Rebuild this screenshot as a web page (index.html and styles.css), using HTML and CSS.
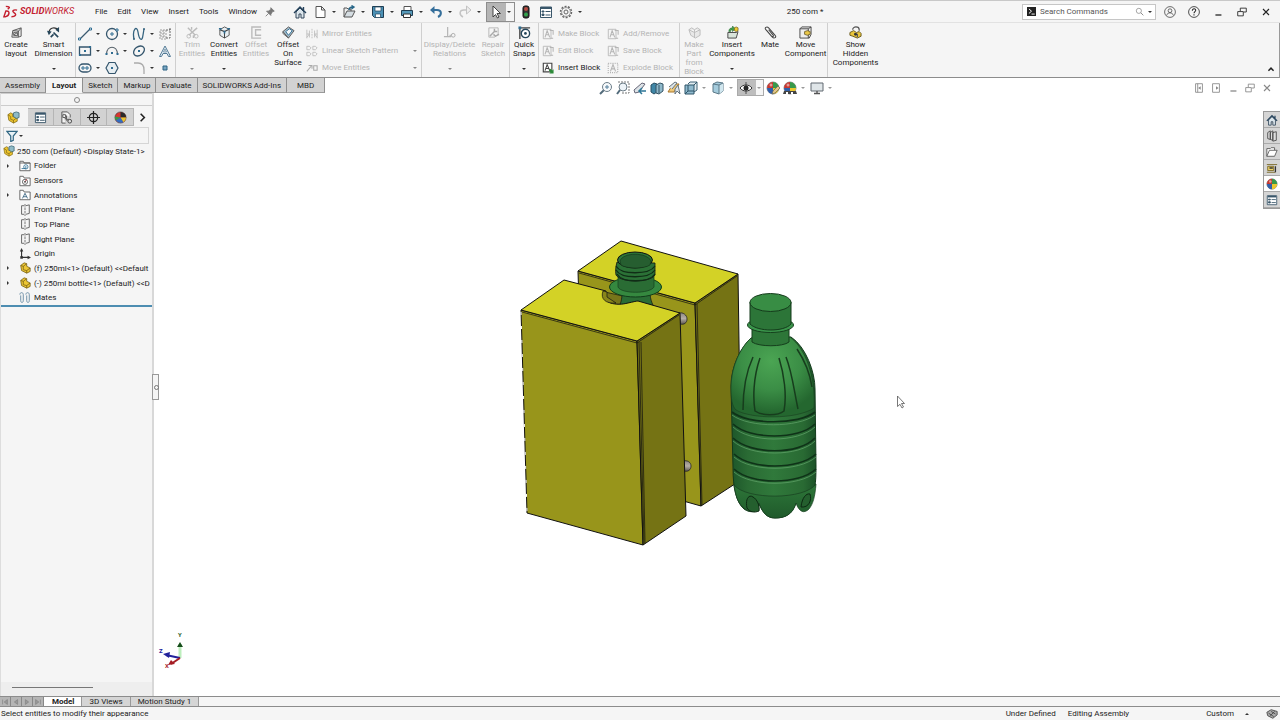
FILE: index.html
```html
<!DOCTYPE html>
<html lang="en">
<head>
    <meta charset="UTF-8">
    <meta name="viewport" content="width=device-width, initial-scale=1.0">
    <title>SOLIDWORKS - 250 com</title>
    <link rel="stylesheet" href="styles.css">
</head>
<body>
    <!-- icon set -->
    <svg class="sprite" aria-hidden="true">
        <symbol id="i-home" viewBox="0 0 14 14"><path d="M3 7v6h3V9h2v4h3V7L7 3z" fill="#dce6ec" stroke="#33475a"/><path d="M1 8l6-6 6 6M10.500 2v3" fill="none" stroke="#26435c" stroke-width="1.400"/></symbol>
        <symbol id="i-new" viewBox="0 0 14 14"><path d="M3 1.500h5.500L12 5v7.500H3zM8.500 1.500V5H12" fill="#fff" stroke="#555"/></symbol>
        <symbol id="i-open" viewBox="0 0 14 14"><path d="M2 12V3h3l1 1h3v2" fill="#eee" stroke="#555"/><path d="M2 12l3-6h8l-3 6z" fill="#d5dde2" stroke="#555"/><path d="M7 5c0-2 2-3 4-3M9.500.500L12 2 9.500 4" fill="none" stroke="#276789" stroke-width="1.400"/></symbol>
        <symbol id="i-save" viewBox="0 0 14 14"><path d="M1.500 1.500h11v11h-9l-2-2z" fill="#4c91b5" stroke="#1e3d52"/><path d="M4 2h6v4H4zM4.500 9h5v3.500h-5z" fill="#fff" stroke="#24455c" stroke-width=".7"/></symbol>
        <symbol id="i-print" viewBox="0 0 14 14"><path d="M4 6V1.500h7V6" fill="#fff" stroke="#555"/><path d="M1.500 5.500h11v5h-11z" fill="#579aba" stroke="#1e3d52"/><path d="M3.500 9h7v3.500h-7z" fill="#fff" stroke="#333"/></symbol>
        <symbol id="i-undo" viewBox="0 0 14 14"><path d="M2 5h6c5 0 5 5 1 7" fill="none" stroke="#356f9b" stroke-width="2"/><path d="M5.500 1L1 5l4.500 4z" fill="#356f9b"/></symbol>
        <symbol id="i-redo" viewBox="0 0 14 14"><path d="M12 5H6c-5 0-5 5-1 7" fill="none" stroke="#c3c3c3" stroke-width="1.500"/><path d="M8.500 1L13 5 8.500 9z" fill="#eee" stroke="#c3c3c3"/></symbol>
        <symbol id="i-cursor" viewBox="0 0 14 14"><path d="M4 1v11l2.500-2.500L8.500 13l1.500-1-2-3.500h3.500z" fill="#fff" stroke="#333" stroke-width=".9"/></symbol>
        <symbol id="i-traffic" viewBox="0 0 14 14"><rect x="4" y="1" width="6" height="12" rx="2" fill="#333" stroke="#111"/><circle cx="7" cy="4" r="2" fill="#b64b42"/><circle cx="7" cy="9.500" r="2" fill="#32a24b"/></symbol>
        <symbol id="i-props" viewBox="0 0 14 14"><path d="M1.500 2h11v10.500h-11z" fill="#fff" stroke="#39566a"/><path d="M2 3h10" stroke="#39566a" stroke-width="2"/><path d="M3 6h2v1H3zm0 3h2v1.500H3z" fill="#39566a" stroke="#39566a"/><path d="M6.500 6.500h5m-5 3.500h5" stroke="#39566a"/></symbol>
        <symbol id="i-gear" viewBox="0 0 14 14"><circle cx="7" cy="7" r="5.500" fill="none" stroke="#666" stroke-width="1.500" stroke-dasharray="2 1.400"/><circle cx="7" cy="7" r="4.400" fill="none" stroke="#777" stroke-width=".7"/><circle cx="7" cy="7" r="2" fill="none" stroke="#666"/></symbol>
        <symbol id="i-pin" viewBox="0 0 14 14"><path d="M8 2l4 4-2 .5-2 3V11L3 6h2l3-2zM5.500 8.500L2 12" fill="#777" stroke="#777"/></symbol>
        <symbol id="i-layout" viewBox="0 0 14 14"><path d="M2 12l1-7 9-3v9l-3 1z" fill="#e8e8e8" stroke="#555"/><path d="M3 5l6 .5 3-3M9 5.500V12M4 10l6-5M4 7l4 .5v3L4 10z" fill="none" stroke="#555"/></symbol>
        <symbol id="i-dimension" viewBox="0 0 14 14"><path d="M2 7C3 1 9 1 12 4" fill="none" stroke="#333" stroke-width="1.300"/><path d="M0 5l5 1-3 4zM13 1v6L9 4z" fill="#26465a"/><path d="M7 7l5 5M4 12l3-3" stroke="#26465a" stroke-width="1.800"/></symbol>
        <symbol id="i-line" viewBox="0 0 14 14"><path d="M2 12L12 2" stroke="#3b5a70" stroke-width="1.200"/><path d="M.500 11h2v2h-2zM11.500 1h2v2h-2z" fill="#fff" stroke="#2f6c91"/></symbol>
        <symbol id="i-circle" viewBox="0 0 14 14"><circle cx="7" cy="7" r="5.500" fill="none" stroke="#35566d" stroke-width="1.300"/><path d="M6 6h2v2H6zM11 2h2v2h-2z" fill="#fff" stroke="#2f6c91"/></symbol>
        <symbol id="i-spline" viewBox="0 0 14 14"><path d="M2 12C0 2 5-2 6 5s4 11 5 3l1-6" fill="none" stroke="#35637f" stroke-width="1.300"/><circle cx="2" cy="12" r="1" fill="#35637f"/><circle cx="12" cy="2" r="1" fill="#35637f"/></symbol>
        <symbol id="i-plane-tool" viewBox="0 0 14 14"><path d="M2 3h6v9H2zM2 6h6M2 9h6M5 3v9" fill="none" stroke="#888" stroke-width=".8" stroke-dasharray="2 1"/><path d="M8 3h4V1M12 1v10H8" fill="none" stroke="#666" stroke-dasharray="2 1"/></symbol>
        <symbol id="i-rect" viewBox="0 0 14 14"><path d="M1.500 3h11v8h-11z" fill="none" stroke="#35566d" stroke-width="1.300"/><path d="M6 6h2v2H6zM11 2h2v2h-2zM1 10h2v2H1z" fill="#2f6c91"/></symbol>
        <symbol id="i-arc" viewBox="0 0 14 14"><path d="M1.500 10C2 1 12 1 12.500 10" fill="none" stroke="#56616a" stroke-width="1.200"/><path d="M6 8h2v2H6zM.500 9h2v2h-2zM11.500 9h2v2h-2z" fill="#2f6c91"/></symbol>
        <symbol id="i-ellipse" viewBox="0 0 14 14"><ellipse cx="7" cy="7" rx="6" ry="4.300" transform="rotate(-38 7 7)" fill="none" stroke="#35566d" stroke-width="1.300"/><path d="M6 6h2v2H6z" fill="#2f6c91"/></symbol>
        <symbol id="i-text" viewBox="0 0 14 14"><path d="M1.500 12.500L7 2l5.500 10.500h-2L9 9.500H5l-1.500 3z" fill="#e7f0f6" stroke="#557b96"/><path d="M5.500 8h3L7 5z" fill="#f5f5f5" stroke="#557b96" stroke-width=".7"/></symbol>
        <symbol id="i-slot" viewBox="0 0 14 14"><rect x="1" y="3" width="12" height="8" rx="4" fill="none" stroke="#35566d" stroke-width="1.300"/><path d="M4 6h2v2H4zM8 6h2v2H8z" fill="#fff" stroke="#2f6c91"/></symbol>
        <symbol id="i-polygon" viewBox="0 0 14 14"><path d="M4 1.500h6L13 7l-3 5.500H4L1 7z" fill="#e7eef2" stroke="#35566d" stroke-width="1.200"/><path d="M6 6h2v2H6z" fill="#2f6c91"/></symbol>
        <symbol id="i-fillet" viewBox="0 0 14 14"><path d="M2 2h4c4 0 6 3 6 7v4" fill="none" stroke="#aaa" stroke-width="1.300"/></symbol>
        <symbol id="i-point" viewBox="0 0 14 14"><path d="M5 5h4v4H5z" fill="#7aa6c2" stroke="#2d6283"/></symbol>
        <symbol id="i-trim" viewBox="0 0 14 14"><path d="M2 2l8 8M12 2L3 10M6 1v3M8 10v3" stroke="#bbb" stroke-width="1.500"/><circle cx="3" cy="11" r="2" fill="none" stroke="#bbb"/><circle cx="11" cy="11" r="2" fill="none" stroke="#bbb"/></symbol>
        <symbol id="i-convert" viewBox="0 0 14 14"><path d="M2 4l5-3 5 2.500v6.500l-5 3-5-3z" fill="#e9eff2" stroke="#555"/><path d="M2 4l5 2 5-2.500M7 6v7" fill="none" stroke="#444" stroke-width="1.100"/><path d="M1 3h3M10 3h3M7 5v3" stroke="#2f6c91" stroke-width="1.800"/></symbol>
        <symbol id="i-offset" viewBox="0 0 14 14"><path d="M12 1H2v12h10M12 4H6v6h6" fill="none" stroke="#bbb" stroke-width="1.500"/></symbol>
        <symbol id="i-surface" viewBox="0 0 14 14"><path d="M1 6l6-5 6 4-6 8z" fill="#a9bfcc" stroke="#555"/><path d="M4 6l4-3 3 2-4 5z" fill="#f3f7f9" stroke="#2f6c91"/><path d="M1 6v2l6 5" fill="none" stroke="#555"/></symbol>
        <symbol id="i-mirror" viewBox="0 0 14 14"><path d="M1 2v10M13 2v10M1 7h3l-3 4M13 7h-3l3 4M4 3v8M10 3v8" fill="none" stroke="#bbb"/><path d="M7 1v12" stroke="#bbb" stroke-dasharray="2 1"/></symbol>
        <symbol id="i-pattern" viewBox="0 0 14 14"><path d="M1 1.500h3l2 2-2 2H1zM8 1.500h3l2 2-2 2H8zM1 8.500h3l2 2-2 2H1zM8 8.500h3l2 2-2 2H8z" fill="none" stroke="#bbb"/></symbol>
        <symbol id="i-move" viewBox="0 0 14 14"><path d="M1 11l5-6M3 4h4v4M9 4.500h4v5H9z" fill="none" stroke="#aaa" stroke-width="1.200"/></symbol>
        <symbol id="i-relations" viewBox="0 0 14 14"><path d="M5 1v10M1 11.500h8" stroke="#b5b5b5" stroke-width="1.300"/><circle cx="11" cy="10" r="2" fill="none" stroke="#aaa"/><path d="M7 10h2" stroke="#aaa"/></symbol>
        <symbol id="i-repair" viewBox="0 0 14 14"><path d="M2 2h10v7l-4 3H2z" fill="none" stroke="#b5b5b5"/><path d="M3 11l5-5M8 3v3h3M7 9l2 2 4-2" fill="none" stroke="#aaa" stroke-width="1.600"/></symbol>
        <symbol id="i-snap" viewBox="0 0 14 14"><path d="M2 14V2h11" fill="none" stroke="#444" stroke-width="1.500"/><path d="M.500.500h3v3h-3z" fill="#2f6c91"/><circle cx="8" cy="8" r="4.500" fill="#fff" stroke="#26465a" stroke-width="1.500"/><circle cx="8" cy="8" r="1.500" fill="#26465a"/></symbol>
        <symbol id="i-block" viewBox="0 0 14 14"><path d="M1.500 1.500h9v11h-9z" fill="none" stroke="#b5b5b5"/><path d="M3.500 11L6 3l3 8M4.500 8h3.500M9 3h4v5M10 12h3" fill="none" stroke="#b5b5b5" stroke-width="1.200"/></symbol>
        <symbol id="i-insert-block" viewBox="0 0 14 14"><path d="M1.500 1.500h10v10h-10z" fill="#fff" stroke="#444" stroke-width="1.300"/><path d="M3.500 10L6 3l3 7M4.500 7.500h3.500" fill="none" stroke="#444" stroke-width="1.200"/><path d="M13.500 8.500v5h-5l1.500-1.500-2-2 2-2 2 2z" fill="#2b8b38"/></symbol>
        <symbol id="i-explode" viewBox="0 0 14 14"><path d="M1.500 1.500h11v11h-11z" fill="none" stroke="#aaa" stroke-width="1.500" stroke-dasharray="1 1.500"/><path d="M4 11l3-8 3 8M5 8h4" fill="none" stroke="#b5b5b5" stroke-width="1.300"/></symbol>
        <symbol id="i-makepart" viewBox="0 0 14 14"><path d="M1 4l3-2 3 2 3-2 3 2v6l-5 3-5-3zM1 4l6 3 6-3M7 4v9" fill="#e8e8e8" stroke="#bbb"/></symbol>
        <symbol id="i-insert" viewBox="0 0 14 14"><path d="M2 7h9l2-1-2 7H2z" fill="#d9e4db" stroke="#444"/><path d="M3 6c0-3 2-4 4-4V0l3 3-3 3V4C5 4 5 5 5 6z" fill="#45a24e" stroke="#28692f" stroke-width=".6"/><path d="M9 2l2-1 2 1v3l-2 1-2-1z" fill="#edc934" stroke="#665516" stroke-width=".7"/></symbol>
        <symbol id="i-clip" viewBox="0 0 14 14"><path d="M3 5l6 7c2 2 5 0 3-2L5 2C3 0 0 2 2 4l6 7c1 1 3 0 2-1L5 4" fill="none" stroke="#444" stroke-width="1.100"/></symbol>
        <symbol id="i-movecomp" viewBox="0 0 14 14"><path d="M1 3l2-2h10v8l-2 4H1z" fill="#eee" stroke="#444"/><path d="M1 3h9v10M10 3l3-2" fill="none" stroke="#444"/><path d="M6 6l3-1 3 1v3l-3 1-3-1z" fill="#e9c748" stroke="#5e501e" stroke-width=".8"/></symbol>
        <symbol id="i-hidden" viewBox="0 0 14 14"><path d="M1 7l4-2 3 2 3-1 2 2v3l-4 2-5-2-3-1z" fill="#eac63b" stroke="#67571c"/><path d="M4 4c0-4 7-4 7 0v1M6 8l3 1v3" fill="none" stroke="#555" stroke-width="1.300"/><circle cx="7" cy="9" r="1.500" fill="#333"/></symbol>
        <symbol id="i-zoomfit" viewBox="0 0 14 14"><path d="M5 9l-4 4" stroke="#526b7b" stroke-width="2"/><circle cx="8" cy="6" r="4.500" fill="#f7fafc" stroke="#6c7d88"/><path d="M8 4v4M6 6h4" stroke="#547f9b"/></symbol>
        <symbol id="i-zoomarea" viewBox="0 0 14 14"><path d="M2 1h11v11H5" fill="none" stroke="#777" stroke-dasharray="2 1"/><path d="M4 9l-3 4" stroke="#526b7b" stroke-width="2"/><circle cx="7" cy="6" r="4" fill="#eef4f8" stroke="#6c7d88"/></symbol>
        <symbol id="i-prevview" viewBox="0 0 14 14"><path d="M1 9l8-7 3 1-6 8-4 1z" fill="#dde3e7" stroke="#667"/><path d="M13 10H7M9 7l-3 3 3 3" fill="none" stroke="#2d7697" stroke-width="1.500"/></symbol>
        <symbol id="i-section" viewBox="0 0 14 14"><path d="M1 4l3-2 3 1v8l-3 2-3-2z" fill="#3f86a6" stroke="#294e62"/><path d="M6 4l4-2 3 1v7l-4 3-3-1z" fill="#8fb9cb" stroke="#345364"/><path d="M9 4v8" stroke="#345364"/></symbol>
        <symbol id="i-dynamic" viewBox="0 0 14 14"><path d="M1 11L6 3h6L7 11z" fill="#efc878" stroke="#a8762c"/><path d="M2 6l6-5 2 1-5 6M8 8l3-4 2 9-3-3-2 3z" fill="#dce4e9" stroke="#66757e"/></symbol>
        <symbol id="i-cube" viewBox="0 0 14 14"><path d="M4 3l2-2h7v8l-3 2" fill="#e2edf2" stroke="#3d6174"/><path d="M1 4h9v9H1z" fill="#8fbace" stroke="#2e5569"/><path d="M10 4l3-3M4 4v6h6M1 13l3-3" fill="none" stroke="#2e5569"/></symbol>
        <symbol id="i-shade" viewBox="0 0 14 14"><path d="M2 3l4-2 6 1v8l-4 3-6-2z" fill="#a4cbdc" stroke="#5b7887"/><path d="M8 4l4-2v8l-4 3z" fill="#d1e7ef"/><path d="M2 3l6 1 4-2M8 4v9" fill="none" stroke="#5b7887"/></symbol>
        <symbol id="i-eye" viewBox="0 0 14 14"><path d="M1 7c3-4 9-4 12 0-3 4-9 4-12 0z" fill="#fff" stroke="#333"/><circle cx="7" cy="7" r="2.500" fill="#222"/><path d="M7 1v12" stroke="#333" stroke-width=".8"/></symbol>
        <symbol id="i-ball" viewBox="0 0 14 14"><circle cx="7" cy="7" r="6" fill="#e9eef1" stroke="#444" stroke-width=".6"/><path d="M7 7V1a6 6 0 0 1 6 6z" fill="#36994a"/><path d="M7 7V1a6 6 0 0 0-6 6z" fill="#c8372f"/><path d="M7 7h6a6 6 0 0 1-6 6z" fill="#eac62f"/><path d="M7 7H1a6 6 0 0 0 6 6z" fill="#315fa9"/><circle cx="5" cy="4" r="1.500" fill="#fff" opacity=".5"/></symbol>
        <symbol id="i-tree-ball" viewBox="0 0 14 14"><circle cx="7" cy="7" r="6" fill="#d8352f" stroke="#333" stroke-width=".6"/><path d="M7 7L7 1a6 6 0 0 1 6 6z" fill="#2a2a2a"/><path d="M7 7h6a6 6 0 0 1-3 5z" fill="#e6c72e"/><path d="M7 7l3 5a6 6 0 0 1-8-2z" fill="#326dc0"/><path d="M7 7l-5 3a6 6 0 0 1-1-4z" fill="#36994a"/></symbol>
        <symbol id="i-appearance" viewBox="0 0 14 14"><use href="#i-ball"/><path d="M6 13l1-3 5-5 2 2-5 5z" fill="#e5c789" stroke="#665" stroke-width=".7"/></symbol>
        <symbol id="i-scene" viewBox="0 0 14 14"><use href="#i-ball"/><path d="M1 10h12l1 3H0z" fill="#444"/><path d="M3 11h2v2H3zM8 11h2v2H8z" fill="#fff"/></symbol>
        <symbol id="i-monitor" viewBox="0 0 14 14"><path d="M1 2h12v8H1z" fill="#dfe5e8" stroke="#606970"/><path d="M7 10v2M4 12.500h6" stroke="#555" stroke-width="1.400"/></symbol>
        <symbol id="i-assembly" viewBox="0 0 14 14"><path d="M1 4l3-2 2 1v3l5 1v4l-4 2-5-3z" fill="#eec52f" stroke="#806812" stroke-width=".8"/><path d="M1 4l3 2v3l3 1v3M7 10l4-3" fill="none" stroke="#806812" stroke-width=".8"/><path d="M7 2l3-1 3 1v5l-3 1-3-2z" fill="#8fbac6" stroke="#35606d" stroke-width=".8"/></symbol>
        <symbol id="i-part" viewBox="0 0 14 14"><path d="M2 4l4-3 3 1v3l4 2v4l-4 2-6-3z" fill="#edc735" stroke="#725d13" stroke-width=".9"/><path d="M2 4l3 1 4-3M5 5v4l4 1v3M9 10l4-3" fill="none" stroke="#725d13" stroke-width=".9"/></symbol>
        <symbol id="i-config" viewBox="0 0 14 14"><path d="M2 1h6l3 3v3M2 1v12h4M3 4h3v3H3z" fill="#f4f4f4" stroke="#555"/><path d="M5 7l3 4M7 5v4h3" fill="none" stroke="#555"/><circle cx="10.500" cy="11" r="2" fill="#ddd" stroke="#444"/></symbol>
        <symbol id="i-target" viewBox="0 0 14 14"><circle cx="7" cy="7" r="4.500" fill="none" stroke="#222" stroke-width="1.300"/><path d="M7 0v14M0 7h14" stroke="#222" stroke-width="1.300"/></symbol>
        <symbol id="i-filter" viewBox="0 0 14 14"><path d="M1 1.500h12L8.500 7v5l-3 1.500V7z" fill="#e8f2f6" stroke="#316783" stroke-width="1.400"/></symbol>
        <symbol id="i-folder" viewBox="0 0 14 14"><path d="M1 12.500V1.500h4l1 2h7v9z" fill="#fff" stroke="#555"/><path d="M1 3.500h12" stroke="#555"/><circle cx="8" cy="8" r="2.500" fill="none" stroke="#317095"/><path d="M3 10h5V7" fill="none" stroke="#317095"/></symbol>
        <symbol id="i-sensor" viewBox="0 0 14 14"><path d="M1 12.500V1.500h4l1 2h7v9z" fill="#fff" stroke="#555"/><circle cx="7" cy="8" r="3" fill="none" stroke="#555"/><path d="M7 8l2-3" stroke="#b33"/><circle cx="7" cy="8" r="1" fill="#333"/></symbol>
        <symbol id="i-annot" viewBox="0 0 14 14"><path d="M1 12.500V1.500h4l1 2h7v9z" fill="#fff" stroke="#555"/><path d="M4 11l3-6 3 6M5 9h4" fill="none" stroke="#36617e"/></symbol>
        <symbol id="i-plane" viewBox="0 0 14 14"><path d="M6 2H3v10h3M8 12l4-1V1L8 2" fill="none" stroke="#555"/><path d="M7 0v14" stroke="#666" stroke-dasharray="3 1"/></symbol>
        <symbol id="i-origin" viewBox="0 0 14 14"><path d="M3 2v9h9" fill="none" stroke="#333" stroke-width="1.300"/><path d="M1 4l2-4 2 4zM10 9l4 2-4 2z" fill="#333"/><path d="M1.500 9.500h3v3h-3z" fill="#333"/></symbol>
        <symbol id="i-mates" viewBox="0 0 14 14"><path d="M2 4v6c0 3 3 3 3 0V3c0-3-4-3-4 0M9 4v6c0 3 3 3 3 0V3c0-3-4-3-4 0" fill="none" stroke="#6b8da5" stroke-width="1.100"/></symbol>
        <symbol id="i-library" viewBox="0 0 14 14"><path d="M2 3l3-2v10l-3-1zM5 3l3-2v11l-3-1zM8 3l4-1v10l-4 1z" fill="#ddd" stroke="#444"/></symbol>
        <symbol id="i-explorer" viewBox="0 0 14 14"><path d="M1 12V3h4l1-1h4v3" fill="#fff" stroke="#555"/><path d="M1 12l3-7h9l-3 7z" fill="#fff" stroke="#555"/></symbol>
        <symbol id="i-palette" viewBox="0 0 14 14"><path d="M1 3h12M1 12h10M2 5h7v5H2z" fill="#f0d46b" stroke="#756321"/><path d="M4 7h4M11 5v7" stroke="#333" stroke-width="1.500"/></symbol>
        <symbol id="i-terminal" viewBox="0 0 14 14"><path d="M0 0h14v14H0z" fill="#222"/><path d="M3 3l4 3.500L3 10M7 11h5" fill="none" stroke="#fff" stroke-width="1.500"/></symbol>
        <symbol id="i-search" viewBox="0 0 14 14"><circle cx="6" cy="6" r="4" fill="none" stroke="#777"/><path d="M9 9l4 4" stroke="#777" stroke-width="1.300"/></symbol>
        <symbol id="i-user" viewBox="0 0 14 14"><circle cx="7" cy="7" r="6.300" fill="none" stroke="#555"/><circle cx="7" cy="5.500" r="2.200" fill="none" stroke="#555"/><path d="M3 11c1-4 7-4 8 0" fill="none" stroke="#555"/></symbol>
        <symbol id="i-help" viewBox="0 0 14 14"><circle cx="7" cy="7" r="6.300" fill="none" stroke="#333"/><path d="M5 5.500c0-3 4-3 4-.5 0 1.500-2 1.500-2 3.500M7 9.500V11" fill="none" stroke="#222" stroke-width="1.200"/></symbol>
        <symbol id="i-min" viewBox="0 0 14 14"><path d="M4 10.500h7" stroke="currentColor" stroke-width="1.500"/></symbol>
        <symbol id="i-restore" viewBox="0 0 14 14"><path d="M2 6.500h6.500v5H2zM5 6V2.500h7V7H9" fill="none" stroke="currentColor"/></symbol>
        <symbol id="i-close" viewBox="0 0 14 14"><path d="M3.500 3.500l7 7M10.500 3.500l-7 7" stroke="currentColor" stroke-width="1.300"/></symbol>
        <symbol id="i-dock-left" viewBox="0 0 14 14"><path d="M3 2h8v10H3zM5.500 2v10" fill="none" stroke="currentColor"/><path d="M9 5v4L6 7z" fill="currentColor"/></symbol>
        <symbol id="i-dock-right" viewBox="0 0 14 14"><path d="M3 2h8v10H3z" fill="none" stroke="currentColor"/><path d="M7 5v4l3-2z" fill="currentColor"/></symbol>
        <symbol id="i-right" viewBox="0 0 14 14"><path d="M5 3l4 4-4 4" fill="none" stroke="#222" stroke-width="1.700"/></symbol>
        <symbol id="i-up" viewBox="0 0 14 14"><path d="M4 9l3-3 3 3" fill="none" stroke="#222" stroke-width="1.700"/></symbol>
        <symbol id="i-tag" viewBox="0 0 14 14"><path d="M1 5l5-3 7 2v4l-5 4-6-3z" fill="#aaa" stroke="#444"/><path d="M3 6l6 4M6 4l5 3M5 9l5-5" stroke="#444"/></symbol>
    </svg>

    <header class="titlebar">
        <div class="logo">
            <svg viewBox="0 0 16 14" aria-hidden="true"><path d="M3 1c4 0 5 1 2 3M3 12c4-1 5-7 0-6L1 12h2M15 5c-4-1-6 1-3 3s1 4-3 4" fill="none" stroke="#c4202f" stroke-width="1.500"/></svg>
            <span><b>SOLID</b>WORKS</span>
        </div>
        <nav class="menu">
            <button>File</button>
            <button>Edit</button>
            <button>View</button>
            <button>Insert</button>
            <button>Tools</button>
            <button>Window</button>
            <button class="pin" aria-label="Pin menu"><svg class="icon"><use href="#i-pin"/></svg></button>
        </nav>
        <div class="quick">
            <button class="solo" aria-label="Home"><svg class="icon"><use href="#i-home"/></svg></button>
            <button aria-label="New"><svg class="icon"><use href="#i-new"/></svg><i class="caret"></i></button>
            <button aria-label="Open"><svg class="icon"><use href="#i-open"/></svg><i class="caret"></i></button>
            <button aria-label="Save"><svg class="icon"><use href="#i-save"/></svg><i class="caret"></i></button>
            <button aria-label="Print"><svg class="icon"><use href="#i-print"/></svg><i class="caret"></i></button>
            <button aria-label="Undo"><svg class="icon"><use href="#i-undo"/></svg><i class="caret"></i></button>
            <button aria-label="Redo"><svg class="icon"><use href="#i-redo"/></svg><i class="caret"></i></button>
            <button class="pressed" aria-label="Select"><svg class="icon"><use href="#i-cursor"/></svg><i class="caret"></i></button>
            <button class="solo" aria-label="Rebuild"><svg class="icon"><use href="#i-traffic"/></svg></button>
            <button class="solo" aria-label="File properties"><svg class="icon"><use href="#i-props"/></svg></button>
            <button aria-label="Options"><svg class="icon"><use href="#i-gear"/></svg><i class="caret"></i></button>
        </div>
        <h1>250 com *</h1>
        <div class="search">
            <svg class="icon"><use href="#i-terminal"/></svg>
            <input type="text" placeholder="Search Commands" aria-label="Search Commands">
            <svg class="icon"><use href="#i-search"/></svg>
            <i class="caret"></i>
        </div>
        <div class="window-buttons">
            <button aria-label="Account"><svg class="icon"><use href="#i-user"/></svg></button>
            <button aria-label="Help"><svg class="icon"><use href="#i-help"/></svg></button>
            <button aria-label="Minimize"><svg class="icon"><use href="#i-min"/></svg></button>
            <button aria-label="Restore"><svg class="icon"><use href="#i-restore"/></svg></button>
            <button aria-label="Close"><svg class="icon"><use href="#i-close"/></svg></button>
        </div>
    </header>

    <section class="ribbon">
        <div class="group">
            <button class="tool w-s"><svg class="icon"><use href="#i-layout"/></svg>Create<br>layout</button>
            <button class="tool w-m"><svg class="icon"><use href="#i-dimension"/></svg>Smart<br>Dimension<i class="caret"></i></button>
        </div>
        <div class="group sketch-tools">
            <button aria-label="Line"><svg class="icon"><use href="#i-line"/></svg><i class="caret"></i></button>
            <button aria-label="Circle"><svg class="icon"><use href="#i-circle"/></svg><i class="caret"></i></button>
            <button aria-label="Spline"><svg class="icon"><use href="#i-spline"/></svg><i class="caret"></i></button>
            <button aria-label="Plane"><svg class="icon"><use href="#i-plane-tool"/></svg></button>
            <button aria-label="Rectangle"><svg class="icon"><use href="#i-rect"/></svg><i class="caret"></i></button>
            <button aria-label="Arc"><svg class="icon"><use href="#i-arc"/></svg><i class="caret"></i></button>
            <button aria-label="Ellipse"><svg class="icon"><use href="#i-ellipse"/></svg><i class="caret"></i></button>
            <button aria-label="Text"><svg class="icon"><use href="#i-text"/></svg></button>
            <button aria-label="Slot"><svg class="icon"><use href="#i-slot"/></svg><i class="caret"></i></button>
            <button aria-label="Polygon"><svg class="icon"><use href="#i-polygon"/></svg></button>
            <button aria-label="Fillet"><svg class="icon"><use href="#i-fillet"/></svg><i class="caret"></i></button>
            <button aria-label="Point"><svg class="icon"><use href="#i-point"/></svg></button>
        </div>
        <div class="group">
            <button class="tool w-s" disabled><svg class="icon"><use href="#i-trim"/></svg>Trim<br>Entities<i class="caret"></i></button>
            <button class="tool w-s"><svg class="icon"><use href="#i-convert"/></svg>Convert<br>Entities<i class="caret"></i></button>
            <button class="tool w-s" disabled><svg class="icon"><use href="#i-offset"/></svg>Offset<br>Entities</button>
            <button class="tool w-s"><svg class="icon"><use href="#i-surface"/></svg>Offset<br>On<br>Surface</button>
            <div class="list list-wide">
                <button disabled><svg class="icon"><use href="#i-mirror"/></svg>Mirror Entities</button>
                <button disabled><svg class="icon"><use href="#i-pattern"/></svg>Linear Sketch Pattern<i class="caret"></i></button>
                <button disabled><svg class="icon"><use href="#i-move"/></svg>Move Entities<i class="caret"></i></button>
            </div>
        </div>
        <div class="group">
            <button class="tool w-xl" disabled><svg class="icon"><use href="#i-relations"/></svg>Display/Delete<br>Relations<i class="caret"></i></button>
            <button class="tool w-s" disabled><svg class="icon"><use href="#i-repair"/></svg>Repair<br>Sketch</button>
        </div>
        <div class="group">
            <button class="tool w-xs"><svg class="icon"><use href="#i-snap"/></svg>Quick<br>Snaps<i class="caret"></i></button>
        </div>
        <div class="group">
            <div class="list">
                <button disabled><svg class="icon"><use href="#i-block"/></svg>Make Block</button>
                <button disabled><svg class="icon"><use href="#i-block"/></svg>Edit Block</button>
                <button><svg class="icon"><use href="#i-insert-block"/></svg>Insert Block</button>
            </div>
            <div class="list list-mid">
                <button disabled><svg class="icon"><use href="#i-block"/></svg>Add/Remove</button>
                <button disabled><svg class="icon"><use href="#i-block"/></svg>Save Block</button>
                <button disabled><svg class="icon"><use href="#i-explode"/></svg>Explode Block</button>
            </div>
        </div>
        <div class="group">
            <button class="tool w-xs" disabled><svg class="icon"><use href="#i-makepart"/></svg>Make<br>Part<br>from<br>Block</button>
            <button class="tool w-l"><svg class="icon"><use href="#i-insert"/></svg>Insert<br>Components<i class="caret"></i></button>
            <button class="tool w-xs"><svg class="icon"><use href="#i-clip"/></svg>Mate</button>
            <button class="tool w-m"><svg class="icon"><use href="#i-movecomp"/></svg>Move<br>Component</button>
        </div>
        <div class="group">
            <button class="tool w-xl"><svg class="icon"><use href="#i-hidden"/></svg>Show<br>Hidden<br>Components</button>
        </div>
        <button class="collapse" aria-label="Collapse ribbon"><svg class="icon"><use href="#i-up"/></svg></button>
    </section>

    <nav class="ribbon-tabs">
        <button>Assembly</button>
        <button class="active">Layout</button>
        <button>Sketch</button>
        <button>Markup</button>
        <button>Evaluate</button>
        <button>SOLIDWORKS Add-Ins</button>
        <button>MBD</button>
    </nav>

    <main class="workspace">
        <aside class="feature-panel">
            <div class="grip"></div>
            <div class="panel-tabs">
                <button class="active" aria-label="Feature tree"><svg class="icon"><use href="#i-assembly"/></svg></button>
                <button aria-label="Properties"><svg class="icon"><use href="#i-props"/></svg></button>
                <button aria-label="Configurations"><svg class="icon"><use href="#i-config"/></svg></button>
                <button aria-label="Dimensions"><svg class="icon"><use href="#i-target"/></svg></button>
                <button aria-label="Display"><svg class="icon"><use href="#i-tree-ball"/></svg></button>
                <button class="more" aria-label="More"><svg class="icon"><use href="#i-right"/></svg></button>
            </div>
            <button class="filter" aria-label="Filter"><svg class="icon"><use href="#i-filter"/></svg><i class="caret"></i></button>
            <ul class="tree">
                <li class="root"><svg class="icon"><use href="#i-assembly"/></svg>250 com (Default) &lt;Display State-1&gt;</li>
                <li class="closed"><svg class="icon"><use href="#i-folder"/></svg>Folder</li>
                <li><svg class="icon"><use href="#i-sensor"/></svg>Sensors</li>
                <li class="closed"><svg class="icon"><use href="#i-annot"/></svg>Annotations</li>
                <li><svg class="icon"><use href="#i-plane"/></svg>Front Plane</li>
                <li><svg class="icon"><use href="#i-plane"/></svg>Top Plane</li>
                <li><svg class="icon"><use href="#i-plane"/></svg>Right Plane</li>
                <li><svg class="icon"><use href="#i-origin"/></svg>Origin</li>
                <li class="closed"><svg class="icon"><use href="#i-part"/></svg>(f) 250ml&lt;1&gt; (Default) &lt;&lt;Default</li>
                <li class="closed"><svg class="icon"><use href="#i-part"/></svg>(-) 250ml bottle&lt;1&gt; (Default) &lt;&lt;D</li>
                <li><svg class="icon"><use href="#i-mates"/></svg>Mates</li>
            </ul>
            <div class="scroll"><span></span></div>
        </aside>

        <section class="viewport">
            <div class="splitter"></div>
            <div class="view-tools">
                <button aria-label="Zoom to fit"><svg class="icon"><use href="#i-zoomfit"/></svg></button>
                <button aria-label="Zoom to area"><svg class="icon"><use href="#i-zoomarea"/></svg></button>
                <button aria-label="Previous view"><svg class="icon"><use href="#i-prevview"/></svg></button>
                <button aria-label="Section view"><svg class="icon"><use href="#i-section"/></svg></button>
                <button aria-label="Dynamic annotation"><svg class="icon"><use href="#i-dynamic"/></svg></button>
                <button class="drop" aria-label="View orientation"><svg class="icon"><use href="#i-cube"/></svg><i class="caret"></i></button>
                <button class="drop" aria-label="Display style"><svg class="icon"><use href="#i-shade"/></svg><i class="caret"></i></button>
                <button class="drop pressed" aria-label="Hide and show items"><svg class="icon"><use href="#i-eye"/></svg><i class="caret"></i></button>
                <button aria-label="Edit appearance"><svg class="icon"><use href="#i-appearance"/></svg></button>
                <button class="drop" aria-label="Apply scene"><svg class="icon"><use href="#i-scene"/></svg><i class="caret"></i></button>
                <button class="drop" aria-label="View settings"><svg class="icon"><use href="#i-monitor"/></svg><i class="caret"></i></button>
            </div>
            <div class="doc-buttons">
                <button aria-label="Dock left"><svg class="icon"><use href="#i-dock-left"/></svg></button>
                <button aria-label="Dock right"><svg class="icon"><use href="#i-dock-right"/></svg></button>
                <button aria-label="Minimize document"><svg class="icon"><use href="#i-min"/></svg></button>
                <button aria-label="Restore document"><svg class="icon"><use href="#i-restore"/></svg></button>
                <button aria-label="Close document"><svg class="icon"><use href="#i-close"/></svg></button>
            </div>

            <svg class="model" viewBox="510 230 320 326" role="img" aria-label="Bottle mould assembly">
                <defs>
                    <linearGradient id="g-body" x1="0" x2="1"><stop offset="0" stop-color="#1d562a"/><stop offset=".2" stop-color="#2a6b34"/><stop offset=".5" stop-color="#30793b"/><stop offset=".85" stop-color="#296a33"/><stop offset="1" stop-color="#1c5228"/></linearGradient>
                    <radialGradient id="g-dome" cx=".48" cy=".3" r=".65"><stop offset="0" stop-color="#4ba553"/><stop offset=".55" stop-color="#3b8e46"/><stop offset="1" stop-color="#24672f"/></radialGradient>
                    <linearGradient id="g-foot" x1="0" x2="0" y1="0" y2="1"><stop offset="0" stop-color="#2e7739"/><stop offset="1" stop-color="#1f5a2b"/></linearGradient>
                    <linearGradient id="g-pin" x1="0" x2="0" y1="0" y2="1"><stop offset="0" stop-color="#8d8780"/><stop offset=".5" stop-color="#b5aea6"/><stop offset="1" stop-color="#5d574f"/></linearGradient>
                </defs>
                <!-- rear mould half -->
                <g stroke="#111" stroke-linejoin="round">
                    <path d="M578 271L695 303 701 506 584 473z" fill="#98951b"/>
                    <path d="M695 303L738 274 741 480 701 506z" fill="#757314"/>
                    <path d="M578 271L621 241 738 274 695 303z" fill="#d3d226"/>
                    <path d="M579 273L695 305 737 276M697 304L702 505" fill="none" stroke-width=".7"/>
                </g>
                <path d="M679 313c4-1 8 2 8 6s-3 6-7 5z" fill="url(#g-pin)" stroke="#222" stroke-width=".8"/>
                <path d="M683 461c4-1 8 1 8 5s-3 6-7 5z" fill="url(#g-pin)" stroke="#222" stroke-width=".8"/>
                <!-- bottle inside the mould -->
                <path d="M605 292l22 5-9 12-11-6z" fill="#77751a" stroke="#111" stroke-width=".7"/>
                <path d="M618 308c3-5 4-8 4-16h28c0 8 3 14 7 20l-20 6z" fill="#2a6d35" stroke="#111" stroke-width=".7"/>
                <ellipse cx="635.500" cy="287" rx="26" ry="10" fill="#35883f" stroke="#113c1a"/>
                <path d="M618 274v13c3 7 32 7 36 0v-14z" fill="#2a6c34" stroke="#163f1d" stroke-width=".7"/>
                <path d="M617 262c-1 4-2 8-1 13 5 8 34 8 39 0V263z" fill="#2b7136" stroke="#111" stroke-width=".8"/>
                <path d="M616 266c5 9 33 9 39 0M616 270c5 9 33 9 39 0M617 274c5 9 32 9 38 0" fill="none" stroke="#102d16" stroke-width="1.300"/>
                <ellipse cx="635" cy="260" rx="17.500" ry="8" fill="#2d7638" stroke="#111"/>
                <path d="M620 261c3-9 27-9 31 0l-1 4c-6 4-23 4-29 0z" fill="#265e30" stroke="#143a1b" stroke-width=".7"/>
                <!-- front mould half -->
                <g stroke="#111" stroke-linejoin="round">
                    <path d="M521 310L637 341 643 545 527 513z" fill="#98951b"/>
                    <path d="M637 341L680 313 686 516 643 545z" fill="#757314"/>
                    <path d="M521 310L564 280 606 291c-6 13 11 15 22 12 5-1 8-2 10-2L680 313 637 341z" fill="#d3d226"/>
                    <path d="M603 291c-3 8 3 13 13 12l-9-6v-5z" fill="#89861a" stroke-width=".7"/>
                    <path d="M522 312L637 343 679 315M639 342L644 544M641 342L645 543" fill="none" stroke-width=".7"/>
                </g>
                <path d="M521 312L527 512" stroke="#fff" stroke-dasharray="3 11"/>
                <!-- second bottle -->
                <path d="M751 338c-10 9-20 28-20 48l2 82c0 20 3 34 11 41 7 5 14 3 15-5 4 9 8 14 16 14 10 0 17-3 21-15 4 5 10 7 14-1 5-10 6-18 6-36l-1-77c0-17-9-42-24-52z" fill="url(#g-body)" stroke="#12391b"/>
                <path d="M751 338c-10 9-20 28-20 50 0 11 1 18 5 22 15 9 60 10 78-2 2-32-9-60-24-71-10 4-27 4-39 1z" fill="url(#g-dome)" stroke="#183e1f" stroke-width=".6"/>
                <path d="M734 485c12 15 71 15 82-1-1 13-3 20-7 25-5 5-10 3-13-6-3 12-12 15-21 15s-13-7-16-15c-2 9-8 9-14 6-7-5-9-12-11-24z" fill="url(#g-foot)" stroke="#173f1f" stroke-width=".7"/>
                <path d="M747 508c-2-9 2-14 6-11 4 2 7 9 6 14-5 2-9 1-12-3zM801 507c1-9 5-14 9-13 2 6-1 14-9 13z" fill="#245f2e" stroke="#0c2912"/>
                <g fill="none" stroke="#0f3218" stroke-width="1.700">
                    <path d="M732 412c16 13 67 13 83 0M733 424c17 16 66 16 82 0M733 438c18 17 66 17 82 0M734 454c17 16 65 16 82 0M734 469c17 16 65 16 82 0"/>
                </g>
                <path d="M732 415c17 13 66 13 83 0M733 427c17 16 65 16 82 0M733 441c18 16 66 16 82 0M734 457c17 15 65 15 82 0M734 472c17 15 65 15 82 0" fill="none" stroke="#63a56b" stroke-width=".7"/>
                <path d="M753 357c-7 15-10 33-10 53M760 358c-7 20-7 41-5 53 7 5 23 5 29 0 3-16 0-37-5-53M786 357c6 15 8 33 12 52M797 349c8 12 13 25 15 38" fill="none" stroke="#173d1d" stroke-width="1.500"/>
                <path d="M752 327v15c7 5 31 5 37 0v-15z" fill="#2d7638" stroke="#163f1d"/>
                <ellipse cx="770.500" cy="325" rx="23" ry="7.500" fill="#39944a" stroke="#153f1c"/>
                <path d="M750 302v22c8 8 34 8 41 0v-22z" fill="#2c7538" stroke="#143b1b"/>
                <ellipse cx="770.500" cy="302.500" rx="20.500" ry="9" fill="#388d44" stroke="#143b1b"/>
            </svg>

            <svg class="triad" viewBox="0 0 32 38" aria-hidden="true">
                <path d="M22 26V12" stroke="#bdeebd" stroke-width="3"/>
                <path d="M19 15l3-5 3 5z" fill="#174d1b"/>
                <path d="M22 26L8 23" stroke="#22229b" stroke-width="2"/><path d="M5 22l7-2-1 6z" fill="#22229b"/>
                <path d="M22 26l-9 6" stroke="#a51c24" stroke-width="2"/><path d="M10 33l3-5 4 4z" fill="#a51c24"/>
                <text x="20" y="5" fill="#2f5f2f">Y</text>
                <text x="1" y="21" fill="#22229b">Z</text>
                <text x="7" y="36" fill="#a51c24">X</text>
            </svg>

            <svg class="pointer" viewBox="0 0 10 14" aria-hidden="true"><path d="M1.500 1v10.500L4 9.300 6 13l1.500-1-2-3.500H8.500z" fill="#fff" stroke="#555" stroke-width=".8"/></svg>

            <div class="task-pane">
                <button aria-label="Resources"><svg class="icon"><use href="#i-home"/></svg></button>
                <button aria-label="Design library"><svg class="icon"><use href="#i-library"/></svg></button>
                <button aria-label="File explorer"><svg class="icon"><use href="#i-explorer"/></svg></button>
                <button aria-label="View palette"><svg class="icon"><use href="#i-palette"/></svg></button>
                <button class="active" aria-label="Appearances"><svg class="icon"><use href="#i-ball"/></svg></button>
                <button aria-label="Custom properties"><svg class="icon"><use href="#i-props"/></svg></button>
            </div>
        </section>
    </main>

    <nav class="doc-tabs">
        <div class="steps">
            <button aria-label="First"><svg viewBox="0 0 10 10"><path d="M2 2v6M8 2L4 5l4 3z"/></svg></button>
            <button aria-label="Previous"><svg viewBox="0 0 10 10"><path d="M7 2L3 5l4 3z"/></svg></button>
            <button aria-label="Next"><svg viewBox="0 0 10 10"><path d="M3 2l4 3-4 3z"/></svg></button>
            <button aria-label="Last"><svg viewBox="0 0 10 10"><path d="M8 2v6M2 2l4 3-4 3z"/></svg></button>
        </div>
        <button class="active">Model</button>
        <button>3D Views</button>
        <button>Motion Study 1</button>
    </nav>

    <footer class="status">
        <span class="hint">Select entities to modify their appearance</span>
        <span>Under Defined</span>
        <span>Editing Assembly</span>
        <button class="units">Custom<i class="caret up"></i></button>
        <button class="tag" aria-label="Tags"><svg class="icon"><use href="#i-tag"/></svg></button>
    </footer>
</body>
</html>
```
FILE: styles.css
```css
* {
    box-sizing: border-box;
}
body {
    margin: 0;
    height: 100vh;
    display: flex;
    flex-direction: column;
    overflow: hidden;
    background: #f5f5f5;
    color: #222;
    font-family: Roboto, "Noto Sans", sans-serif;
    font-size: 8px;
    line-height: 9px;
}
button {
    display: flex;
    align-items: center;
    margin: 0;
    padding: 0;
    border: 0;
    background: none;
    color: inherit;
    font: inherit;
    white-space: nowrap;
}
button:disabled {
    color: #b4b4b4;
}
.sprite {
    display: none;
}
.icon {
    width: 12px;
    height: 12px;
    flex: none;
}
.caret {
    flex: none;
    border: 2px solid transparent;
    border-top-color: #333;
    border-bottom: 0;
}
.caret.up {
    border-top: 0;
    border-bottom: 2px solid #333;
}
button:disabled .caret {
    border-top-color: #888;
}

/* title bar */
.titlebar {
    flex: none;
    display: flex;
    align-items: center;
    height: 23px;
    border-top: 1px solid #c8c8c8;
    border-bottom: 1px solid #e2e2e2;
}
.logo {
    display: flex;
    align-items: center;
    gap: 2px;
    width: 91px;
    padding-left: 3px;
    color: #c4202f;
    font-size: 9px;
    font-style: italic;
}
.logo svg {
    width: 15px;
    height: 14px;
}
.menu {
    display: flex;
    align-items: center;
    gap: 10px;
    width: 196px;
    padding-left: 4px;
}
.menu .pin {
    margin-left: -3px;
}
.quick {
    display: flex;
    align-items: center;
    height: 100%;
    padding-left: 6px;
}
.quick button {
    width: 29px;
    height: 20px;
    gap: 5px;
}
.quick .solo {
    width: 20px;
}
.quick .icon {
    width: 14px;
    height: 14px;
}
.quick .pressed {
    margin: 0 4px 0 -1px;
    gap: 4px;
    padding: 0 3px 0 2px;
    border: 1px solid #8d8d8d;
    background: linear-gradient(to right, #b5b5b5 19px, #f5f5f5 19px);
}
.titlebar h1 {
    flex: 1;
    margin: 0;
    font-size: 8px;
    font-weight: normal;
    text-align: center;
}
.search {
    display: flex;
    align-items: center;
    gap: 4px;
    width: 134px;
    height: 16px;
    padding: 0 3px 0 4px;
    border: 1px solid #c6c6c6;
    background: #fff;
}
.search .icon {
    width: 9px;
    height: 9px;
}
.search input {
    flex: 1;
    min-width: 0;
    padding: 0;
    border: 0;
    outline: 0;
    font: inherit;
}
.search input::placeholder {
    color: #555;
}
.window-buttons {
    display: flex;
    gap: 12px;
    padding: 0 8px;
}

/* ribbon */
.ribbon {
    flex: none;
    display: flex;
    height: 55px;
    border-right: 1px solid #999;
    border-bottom: 1px solid #8c8c8c;
}
.group {
    display: flex;
    border-right: 1px solid #cfcfcf;
}
.group:nth-last-child(2) {
    border-right: 0;
}
.tool {
    flex-direction: column;
    justify-content: flex-start;
    height: 54px;
    padding: 3px 0 7px;
    text-align: center;
}
.tool .icon {
    width: 13px;
    height: 13px;
    margin-bottom: 1px;
}
.tool .caret {
    margin-top: auto;
}
.w-xs {
    width: 28px;
}
.w-s {
    width: 32px;
}
.w-m {
    width: 43px;
}
.w-l {
    width: 48px;
}
.w-xl {
    width: 55px;
}
.sketch-tools {
    display: grid;
    grid-template-columns: 27px 27px 26px 17px;
    grid-template-rows: repeat(3, 17px);
    padding: 2px 0 0 2px;
}
.sketch-tools button {
    gap: 4px;
}
.sketch-tools .icon {
    width: 14px;
    height: 14px;
}
.list {
    display: grid;
    grid-template-rows: repeat(3, 17px);
    width: 65px;
    padding: 2px 0 0 3px;
}
.list-mid {
    width: 75px;
}
.list-wide {
    width: 117px;
    padding: 2px 4px 0 2px;
}
.list button {
    gap: 4px;
}
.list .caret {
    margin-left: auto;
}
.collapse {
    align-self: flex-end;
    margin: 0 2px 2px auto;
}
.ribbon-tabs {
    flex: none;
    display: flex;
    height: 15px;
    background: #fff;
}
.ribbon-tabs button {
    padding: 0 5px;
    border-right: 1px solid #8f8f8f;
    border-bottom: 1px solid #9a9a9a;
    background: #d2d2d2;
}
.ribbon-tabs .active {
    padding: 0 6px;
    border-bottom-color: #f5f5f5;
    background: #f5f5f5;
    font-weight: bold;
}
.ribbon-tabs button:last-child {
    padding: 0 10px;
}

/* feature tree */
.workspace {
    flex: 1;
    min-height: 0;
    display: flex;
}
.feature-panel {
    flex: none;
    display: flex;
    flex-direction: column;
    width: 154px;
    border-left: 1px solid #ddd;
    border-right: 2px solid #d8d8d8;
}
.grip {
    display: flex;
    justify-content: center;
    align-items: center;
    height: 13px;
    border-top: 1px solid #ccc;
    border-bottom: 1px solid #ccc;
}
.grip::after {
    content: "";
    width: 4px;
    height: 4px;
    border: 1px solid #888;
    border-radius: 50%;
}
.panel-tabs {
    display: flex;
    height: 18px;
    margin-top: 2px;
}
.panel-tabs button {
    flex: 1;
    justify-content: center;
    border: solid #b5b5b5;
    border-width: 1px 1px 1px 0;
    background: #d2d2d2;
}
.panel-tabs .icon {
    width: 13px;
    height: 13px;
}
.panel-tabs .active,
.panel-tabs .more {
    border-color: transparent;
    background: none;
}
.panel-tabs .more {
    flex: 0 0 18px;
}
.filter {
    gap: 1px;
    height: 17px;
    margin: 1px 3px 0 2px;
    padding-left: 2px;
    border: 1px solid #d5d5d5;
}
.tree {
    display: grid;
    grid-auto-rows: 1fr;
    height: 163px;
    margin: 0;
    padding: 0;
    border-bottom: 2px solid #4d8db1;
    list-style: none;
}
.tree li {
    display: flex;
    align-items: center;
    gap: 3px;
    min-width: 0;
    padding-left: 18px;
    overflow: hidden;
    white-space: nowrap;
}
.tree .root {
    gap: 2px;
    padding-left: 2px;
}
.tree .closed {
    padding-left: 6px;
}
.tree .closed::before {
    content: "";
    margin-right: 7px;
    border: 2px solid transparent;
    border-left-color: #333;
    border-right: 0;
}
.scroll {
    height: 14px;
    margin-top: auto;
    padding: 5px 11px;
    background: #eee;
}
.scroll span {
    display: block;
    width: 81px;
    border-top: 1px solid #777;
}

/* graphics area */
.viewport {
    position: relative;
    flex: 1;
    background: #fff;
}
.splitter {
    position: absolute;
    left: -2px;
    top: 281px;
    width: 7px;
    height: 26px;
    border: 1px solid #999;
    background: #f5f5f5;
}
.splitter::after {
    content: "";
    position: absolute;
    left: 1px;
    top: 10px;
    width: 3px;
    height: 3px;
    border: 1px solid #777;
    border-radius: 50%;
}
.view-tools {
    position: absolute;
    left: 444px;
    top: -14px;
    display: flex;
    align-items: center;
}
.view-tools button {
    height: 17px;
    padding: 0 2px 0 1px;
}
.view-tools .icon {
    width: 14px;
    height: 14px;
}
.view-tools .drop {
    gap: 4px;
    padding-right: 4px;
}
.view-tools .caret {
    border-top-color: #999;
}
.view-tools .pressed {
    margin-right: 1px;
    padding: 0 2px 0 1px;
    border: 1px solid #aaa;
    background: linear-gradient(to right, #bdbdbd 18px, #f5f5f5 18px);
}
.doc-buttons {
    position: absolute;
    right: 7px;
    top: -11px;
    display: flex;
    gap: 5px;
    color: #888;
}
.model {
    position: absolute;
    left: 356px;
    top: 137px;
    width: 320px;
    height: 326px;
}
.triad {
    position: absolute;
    left: 4px;
    bottom: 26px;
    width: 32px;
    height: 38px;
    font-size: 6px;
    font-weight: bold;
}
.pointer {
    position: absolute;
    left: 742px;
    top: 302px;
    width: 10px;
    height: 14px;
}
.task-pane {
    position: absolute;
    right: 0;
    top: 18px;
    width: 17px;
    border: 1px solid #999;
    border-right: 0;
}
.task-pane button {
    width: 16px;
    height: 16px;
    justify-content: center;
    border-bottom: 1px solid #aaa;
    background: #d5d5d5;
}
.task-pane .active {
    background: #fff;
}

/* bottom bars */
.doc-tabs {
    flex: none;
    display: flex;
    height: 11px;
    border-top: 1px solid #8c8c8c;
    border-bottom: 1px solid #8c8c8c;
}
.doc-tabs > button {
    padding: 0 7px;
    border-right: 1px solid #999;
    background: #d5d5d5;
}
.doc-tabs > .active {
    padding: 0 7px 0 8px;
    background: #fff;
    font-weight: bold;
}
.steps {
    display: flex;
    background: #b5b5b5;
}
.steps button {
    width: 11px;
    justify-content: center;
    border-right: 1px solid #888;
}
.steps svg {
    width: 8px;
    height: 8px;
    fill: #999;
    stroke: #888;
}
.status {
    flex: none;
    display: flex;
    align-items: center;
    gap: 12px;
    height: 13px;
    padding-right: 2px;
}
.status .hint {
    flex: 1;
    padding-left: 1px;
}
.units {
    gap: 11px;
    margin: 0 5px 0 65px;
}
```
